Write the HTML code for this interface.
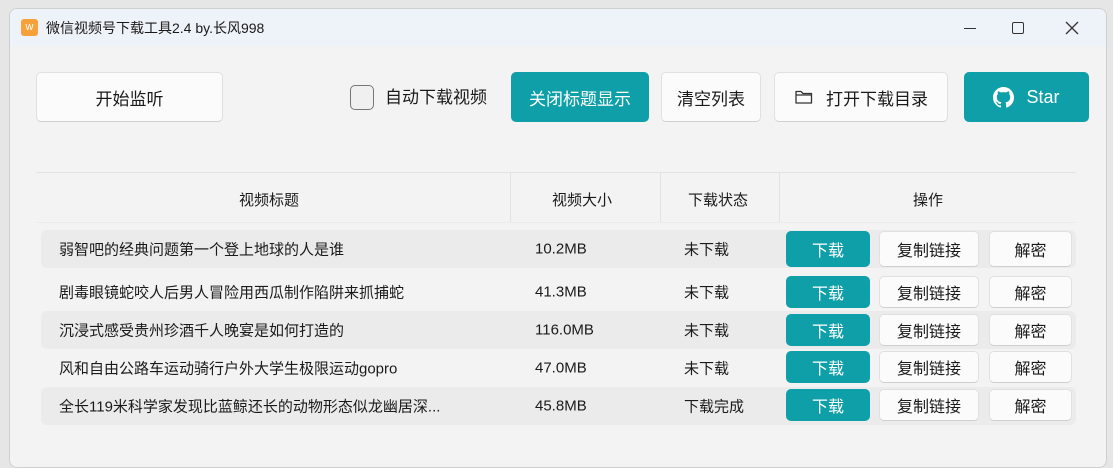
<!DOCTYPE html>
<html><head><meta charset="utf-8"><style>
*{box-sizing:border-box;margin:0;padding:0}
body{width:1113px;height:455px;background:#e6e6e6;font-family:"Liberation Sans","Noto Sans CJK SC",sans-serif;color:#1a1a1a;position:relative;overflow:hidden}
.win{position:absolute;left:9px;top:8px;width:1098px;height:460px;background:#f3f3f3;border:1px solid #cfcfcf;border-radius:8px;overflow:hidden}
.tb{position:absolute;left:0;top:0;right:0;height:37px;background:#eef2f9}
.a{position:absolute}
.btn{position:absolute;background:#fbfbfb;border:1px solid #e0e0e0;border-bottom-color:#cfcfcf;border-radius:5px;display:flex;align-items:center;justify-content:center;font-size:17px}
.t{background:#0e9fa8;border-color:#0e9fa8;color:#fff}
.row{position:absolute;left:31px;width:1035px;height:38px;border-radius:6px;font-size:15px}
.row.g{background:#ebebeb}
.row span{position:absolute;top:50%;transform:translateY(-50%)}
.sb{position:absolute;height:32px;font-size:16px}
</style></head><body>
<div class="win">
<div class="tb">
<div class="a" style="left:11px;top:10px;width:17px;height:17px;background:#f6a13a;border-radius:3px;color:#fff;font-size:11px;text-align:center;line-height:17px">w</div>
<div class="a" style="left:36px;top:9px;font-size:14px">微信视频号下载工具2.4 by.长风998</div>
<div class="a" style="left:954px;top:19px;width:12px;height:1px;background:#333"></div>
<div class="a" style="left:1002px;top:13px;width:12px;height:12px;border:1.3px solid #333;border-radius:2px"></div>
<svg class="a" style="left:1055px;top:12px" width="14" height="14"><path d="M1 1L13 13M13 1L1 13" stroke="#333" stroke-width="1.3"/></svg>
</div>
<div class="btn" style="left:26px;top:63px;width:187px;height:50px">开始监听</div>
<div class="a" style="left:340px;top:76px;width:24px;height:25px;border:1.3px solid #777;border-radius:5px;background:#f0f0f0"></div>
<div class="a" style="left:375px;top:77px;font-size:17px;line-height:24px">自动下载视频</div>
<div class="btn t" style="left:501px;top:63px;width:138px;height:50px">关闭标题显示</div>
<div class="btn" style="left:651px;top:63px;width:100px;height:50px">清空列表</div>
<div class="btn" style="left:764px;top:63px;width:174px;height:50px"><svg width="20" height="18" style="margin-right:12px"><path d="M2 3.5h5l2 2h8.5v9.5h-15.5z M2 7h15.5" fill="none" stroke="#333" stroke-width="1.3" stroke-linejoin="round"/></svg>打开下载目录</div>
<div class="btn t" style="left:954px;top:63px;width:125px;height:50px;font-size:18px"><svg width="21" height="21" viewBox="0 0 16 16" style="margin-right:12px"><path fill="#fff" d="M8 0C3.58 0 0 3.58 0 8c0 3.54 2.290 6.53 5.47 7.59.4.07.55-.17.55-.38v-1.33c-2.23.48-2.7-1.070-2.7-1.070-.36-.92-.89-1.17-.89-1.17-.73-.5.06-.49.06-.49.8.06 1.23.83 1.23.83.72 1.22 1.87.87 2.33.66.07-.52.28-.87.5-1.070-1.78-.2-3.64-.89-3.64-3.95 0-.87.31-1.59.82-2.15-.08-.2-.36-1.020.08-2.12 0 0 .67-.21 2.2.82a7.6 7.6 0 0 1 4 0c1.53-1.040 2.2-.82 2.2-.82.44 1.1.16 1.92.08 2.12.51.56.82 1.27.82 2.15 0 3.070-1.87 3.75-3.65 3.95.29.25.54.73.54 1.48v2.2c0 .21.15.46.55.38A8.01 8.01 0 0 0 16 8c0-4.42-3.58-8-8-8z"/></svg>Star</div>
<div class="a" style="left:26px;top:163px;width:1040px;height:1px;background:#e2e2e2"></div>
<div class="a" style="left:500px;top:164px;width:1px;height:50px;background:#e2e2e2"></div>
<div class="a" style="left:650px;top:164px;width:1px;height:50px;background:#e2e2e2"></div>
<div class="a" style="left:769px;top:164px;width:1px;height:50px;background:#e2e2e2"></div>
<div class="a" style="left:26px;top:213px;width:1040px;height:1px;background:#ececec"></div>
<div class="a" style="left:229px;top:180px;font-size:15px">视频标题</div>
<div class="a" style="left:542px;top:180px;font-size:15px">视频大小</div>
<div class="a" style="left:678px;top:180px;font-size:15px">下载状态</div>
<div class="a" style="left:903px;top:180px;font-size:15px">操作</div>

<div class="row g" style="top:221px"><span style="left:18px">弱智吧的经典问题第一个登上地球的人是谁</span><span style="left:494px">10.2MB</span><span style="left:643px">未下载</span></div>
<div class="row" style="top:264px"><span style="left:18px">剧毒眼镜蛇咬人后男人冒险用西瓜制作陷阱来抓捕蛇</span><span style="left:494px">41.3MB</span><span style="left:643px">未下载</span></div>
<div class="row g" style="top:302px"><span style="left:18px">沉浸式感受贵州珍酒千人晚宴是如何打造的</span><span style="left:494px">116.0MB</span><span style="left:643px">未下载</span></div>
<div class="row" style="top:340px"><span style="left:18px">风和自由公路车运动骑行户外大学生极限运动gopro</span><span style="left:494px">47.0MB</span><span style="left:643px">未下载</span></div>
<div class="row g" style="top:378px"><span style="left:18px">全长119米科学家发现比蓝鲸还长的动物形态似龙幽居深...</span><span style="left:494px">45.8MB</span><span style="left:643px">下载完成</span></div>

<div class="btn t sb" style="left:776px;top:222px;width:84px;height:36px">下载</div>
<div class="btn sb" style="left:869px;top:222px;width:100px;height:36px">复制链接</div>
<div class="btn sb" style="left:979px;top:222px;width:83px;height:36px">解密</div>
<div class="btn t sb" style="left:776px;top:267px;width:84px">下载</div>
<div class="btn sb" style="left:869px;top:267px;width:100px">复制链接</div>
<div class="btn sb" style="left:979px;top:267px;width:83px">解密</div>
<div class="btn t sb" style="left:776px;top:305px;width:84px">下载</div>
<div class="btn sb" style="left:869px;top:305px;width:100px">复制链接</div>
<div class="btn sb" style="left:979px;top:305px;width:83px">解密</div>
<div class="btn t sb" style="left:776px;top:342px;width:84px">下载</div>
<div class="btn sb" style="left:869px;top:342px;width:100px">复制链接</div>
<div class="btn sb" style="left:979px;top:342px;width:83px">解密</div>
<div class="btn t sb" style="left:776px;top:380px;width:84px">下载</div>
<div class="btn sb" style="left:869px;top:380px;width:100px">复制链接</div>
<div class="btn sb" style="left:979px;top:380px;width:83px">解密</div>
</div>
</body></html>
